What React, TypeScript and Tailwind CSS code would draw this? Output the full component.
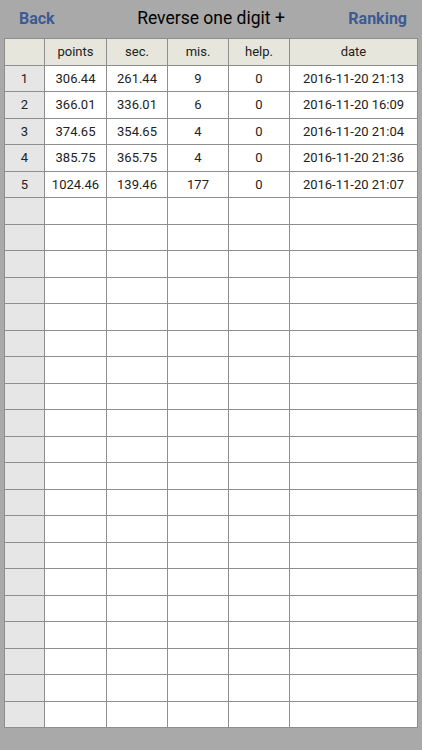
const rows = [
  ['1', '306.44', '261.44', '9', '0', '2016-11-20 21:13'],
  ['2', '366.01', '336.01', '6', '0', '2016-11-20 16:09'],
  ['3', '374.65', '354.65', '4', '0', '2016-11-20 21:04'],
  ['4', '385.75', '365.75', '4', '0', '2016-11-20 21:36'],
  ['5', '1024.46', '139.46', '177', '0', '2016-11-20 21:07'],
];

const header = ['', 'points', 'sec.', 'mis.', 'help.', 'date'];

export default function App() {
  const all = [...rows, ...Array.from({ length: 20 }, () => ['', '', '', '', '', ''])];

  return (
    <div
      className="w-[422px] h-[750px] bg-[#a9a9a9] flex flex-col"
      style={{ fontFamily: '"Helvetica Neue", Roboto, "Liberation Sans", Arial, sans-serif' }}
    >
      <div className="h-[38px] flex items-center px-[19px] pb-[1px]">
        <div className="flex-1">
          <span className="text-[16px] font-bold text-[#3d5a93]">Back</span>
        </div>
        <span className="text-[17.5px] text-black">Reverse one digit +</span>
        <div className="flex-1 flex justify-end">
          <span className="text-[16px] font-bold text-[#3d5a93] -mr-[4px]">Ranking</span>
        </div>
      </div>

      <div className="ml-[4px] w-[414px] grid grid-cols-[39px_61px_60px_60px_60px_127px] gap-px bg-[#8e8e8e] border border-[#8e8e8e]">
        {header.map((h, i) => (
          <div
            key={'h' + i}
            className="h-[25.5px] bg-[#e6e6dc] flex items-center justify-center text-[13px] text-[#222]"
          >
            {h}
          </div>
        ))}
        {all.map((r, ri) =>
          r.map((c, ci) => (
            <div
              key={ri + '-' + ci}
              className={`h-[25.5px] flex items-center justify-center text-[13px] text-[#222] ${
                ci === 0 ? 'bg-[#e6e6e6]' : 'bg-white'
              }`}
            >
              {c}
            </div>
          ))
        )}
      </div>
    </div>
  );
}
